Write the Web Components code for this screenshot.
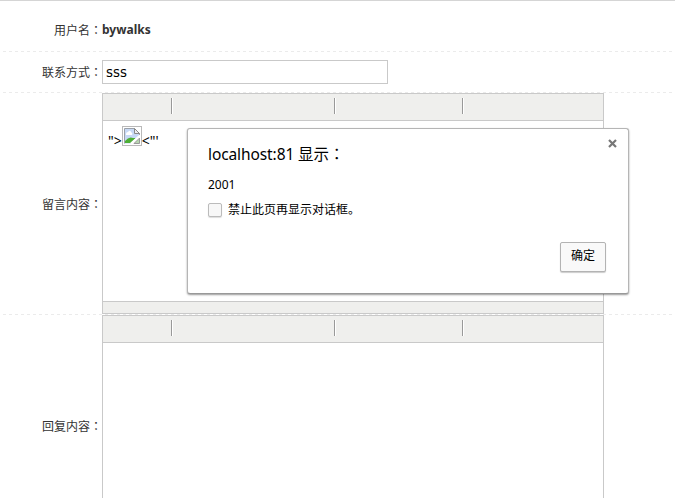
<!DOCTYPE html>
<html lang="zh-CN"><head><meta charset="utf-8"><title>留言</title>
<style>html,body{margin:0;background:#fff;overflow:hidden;height:498px}</style></head><body>
<message-page></message-page>
<script>
function define(name, html) {
  const t = document.createElement('template');
  t.innerHTML = html;
  customElements.define(name, class extends HTMLElement {
    constructor() {
      super();
      this.attachShadow({mode: 'open'}).append(t.content.cloneNode(true));
    }
  });
}

define('form-row', `<style>
:host{display:grid;grid-template-columns:102px 1fr;box-sizing:border-box;position:relative;align-items:center}
:host::after{content:"";position:absolute;left:3px;right:0;bottom:0;height:1px;background:repeating-linear-gradient(90deg,#ebebeb 0 3px,transparent 3px 6px)}
.label{text-align:right;font-size:12px;line-height:16px;color:#333;white-space:nowrap;position:relative;top:var(--label-shift,0px)}
.c{font-family:"Noto Sans CJK TC",sans-serif}
.field{align-self:start;padding-top:var(--pad,0px);position:relative;z-index:1}
</style><div class="label"><slot name="label"></slot><span class="c" lang="zh-TW">：</span></div><div class="field"><slot></slot></div>`);

define('text-field', `<style>
:host{display:block;box-sizing:border-box;width:286px;height:24px;border:1px solid #c9c9c9;padding:0 3px;font:13.33px/23px "DejaVu Sans",sans-serif;color:#000;background:#fff}
</style><slot></slot>`);

define('broken-image', `<style>:host{display:block;width:20px;height:20px}svg{display:block}</style>
<svg width="20" height="20" viewBox="0 0 20 20"><rect x=".5" y=".5" width="19" height="19" fill="#fff" stroke="#b9b9b9"/>
<path d="M2.5 2.5H12.5L17.5 7.5V9.5L8.500 17.500H2.500Z" fill="#c7d9f5"/>
<path d="M4 8Q4 6 6 6Q8 3.500 9.500 6.500Q11 7 10 9H4Z" fill="#fff"/>
<path d="M3 17V15Q7 10 11 12L14 12L8.500 17Z" fill="#4caf35"/>
<path d="M2.500 17.500V2.500H12.500L17.500 7.500V9" fill="none" stroke="#9aa0a8"/>
<path d="M12.500 2.500V7.500H17.500Z" fill="#eee" stroke="#888"/>
<path d="M12 17.500L17.500 12V17.500Z" fill="#b9d7b2" stroke="#999"/>
<path d="M9 17.500L18 9.500" stroke="#fff" stroke-width="2"/></svg>`);

define('tool-bar', `<style>
:host{display:grid;grid-template-columns:68px 163px 128px 1fr;height:26px;background:#efefed;border-bottom:1px solid #c9c9c9;padding-top:0;align-items:start}
i{height:16px;margin-top:4px;box-sizing:border-box;border-left:1px solid #999;box-shadow:inset 1px 0 #fff}
</style><span></span><i></i><i></i><i></i>`);

define('rich-editor', `<style>
:host{display:flex;flex-direction:column;box-sizing:border-box;width:502px;height:221px;border:1px solid #c9c9c9;background:#fff}
.body{flex:1;padding:5px 5px 0;display:flex;align-items:flex-start;font:14px/30px "Noto Sans",sans-serif;color:#000}
.status{height:11px;background:#efefed;border-top:1px solid #c9c9c9}
</style><tool-bar></tool-bar><div class="body"><slot></slot></div><div class="status"></div>`);

define('alert-dialog', `<style>
:host{position:absolute;z-index:5;left:187px;top:128px;width:442px;height:166px;box-sizing:border-box;border:1px solid #b5b5b5;border-bottom-color:#999;border-radius:3px;background:#fff;box-shadow:0 1px 2px rgba(0,0,0,.4);padding:13px 22px 0 20px;color:#000}
h1{font-size:15.5px;line-height:22px;font-weight:400;margin:0;letter-spacing:-.1px}
.c{font-family:"Noto Sans CJK TC",sans-serif}
.message{font-size:12px;line-height:16px;margin-top:12px}
.check{display:flex;gap:6px;align-items:center;font-size:12px;line-height:16px;margin-top:9px}
.box{width:14px;height:14px;box-sizing:border-box;border:1px solid #bbb;border-radius:2px;background:#f7f7f7;box-shadow:0 1px 1px #ddd}
.actions{display:flex;justify-content:flex-end;margin-top:24px}
button{width:46px;height:30px;box-sizing:border-box;border:1px solid #b3b3b3;border-radius:2px;background:#f9f9f9;box-shadow:0 1px 1px rgba(0,0,0,.2);font:inherit;font-size:12px;line-height:16px;padding:0 0 2px;color:#000}
.close{position:absolute;right:11px;top:10px}
</style><h1>localhost:81 显示<span class="c" lang="zh-TW">：</span></h1>
<svg class="close" width="9" height="9" viewBox="0 0 9 9"><path d="M1 1L8 8M8 1L1 8" stroke="#777" stroke-width="2.2"/></svg>
<div class="message">2001</div><div class="check"><span class="box"></span><span>禁止此页再显示对话框。</span></div>
<div class="actions"><button>确定</button></div>`);

define('message-page', `<style>
:host{display:block;position:relative;height:498px;overflow:hidden;box-sizing:border-box;border-top:1px solid #d5d5d5;font-family:"Noto Sans","Noto Sans CJK SC",sans-serif}
.user{height:51px;--label-shift:4px;--pad:21px}
.contact{height:41px;--pad:8px}
.content{height:222px}
.reply{height:222px}
b{display:block;font-size:12px;line-height:16px;color:#333}
alert-dialog{top:127px}
.t{white-space:pre}
broken-image{margin:0}
</style>
<form-row class="user"><span slot="label">用户名</span><b>bywalks</b></form-row>
<form-row class="contact"><span slot="label">联系方式</span><text-field>sss</text-field></form-row>
<form-row class="content"><span slot="label">留言内容</span><rich-editor><span class="t">"&gt;</span><broken-image></broken-image><span class="t">&lt;"'</span></rich-editor></form-row>
<form-row class="reply"><span slot="label">回复内容</span><rich-editor></rich-editor></form-row>
<alert-dialog></alert-dialog>`);
</script></body></html>
